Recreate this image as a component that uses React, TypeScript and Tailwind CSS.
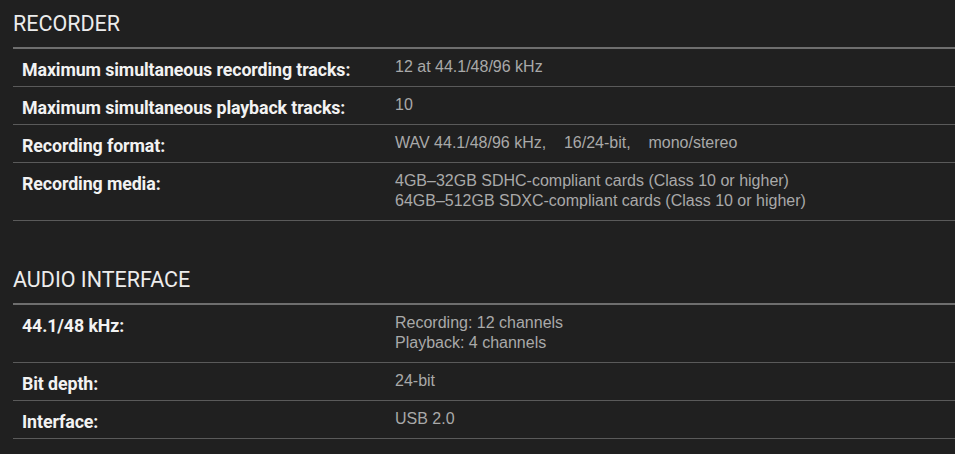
import React from 'react';

type Spec = { label: string; value: string[] };

const sections: { title: string; rows: Spec[] }[] = [
  {
    title: 'RECORDER',
    rows: [
      { label: 'Maximum simultaneous recording tracks:', value: ['12 at 44.1/48/96 kHz'] },
      { label: 'Maximum simultaneous playback tracks:', value: ['10'] },
      { label: 'Recording format:', value: ['WAV 44.1/48/96 kHz,\u00a0\u00a0\u00a0 16/24-bit,\u00a0\u00a0\u00a0 mono/stereo'] },
      {
        label: 'Recording media:',
        value: [
          '4GB\u201332GB SDHC-compliant cards (Class 10 or higher)',
          '64GB\u2013512GB SDXC-compliant cards (Class 10 or higher)'
        ]
      }
    ]
  },
  {
    title: 'AUDIO INTERFACE',
    rows: [
      { label: '44.1/48 kHz:', value: ['Recording: 12 channels', 'Playback: 4 channels'] },
      { label: 'Bit depth:', value: ['24-bit'] },
      { label: 'Interface:', value: ['USB 2.0'] }
    ]
  }
];

function SpecSection({ title, rows }: { title: string; rows: Spec[] }) {
  return (
    <section className="pl-[13px]">
      <h2 className="h-[47px] pt-[10px] text-[21.5px] leading-[28px] font-normal text-[#ececec] font-['Roboto',sans-serif]">
        {title}
      </h2>
      <div className="border-t-2 border-[#6e6e6e]">
        {rows.map((row) => (
          <div key={row.label} className="flex items-start border-b border-[#5a5a5a] pt-[8px] pb-[9px]">
            <div className="w-[382px] shrink-0 pl-[9px] mt-[3px] -mb-[3px] text-[17.8px] leading-[20px] font-bold tracking-[-0.1px] text-[#f2f2f2] font-['Roboto',sans-serif]">
              {row.label}
            </div>
            <div className="text-[16px] leading-[20px] text-[#a9a9a9] font-['Liberation_Sans',Arial,sans-serif]">
              {row.value.map((line) => (
                <div key={line}>{line}</div>
              ))}
            </div>
          </div>
        ))}
      </div>
    </section>
  );
}

export default function App() {
  return (
    <div className="w-[955px] h-[454px] overflow-hidden bg-[#202020]">
      <SpecSection {...sections[0]} />
      <div className="h-[35px]" />
      <SpecSection {...sections[1]} />
    </div>
  );
}
